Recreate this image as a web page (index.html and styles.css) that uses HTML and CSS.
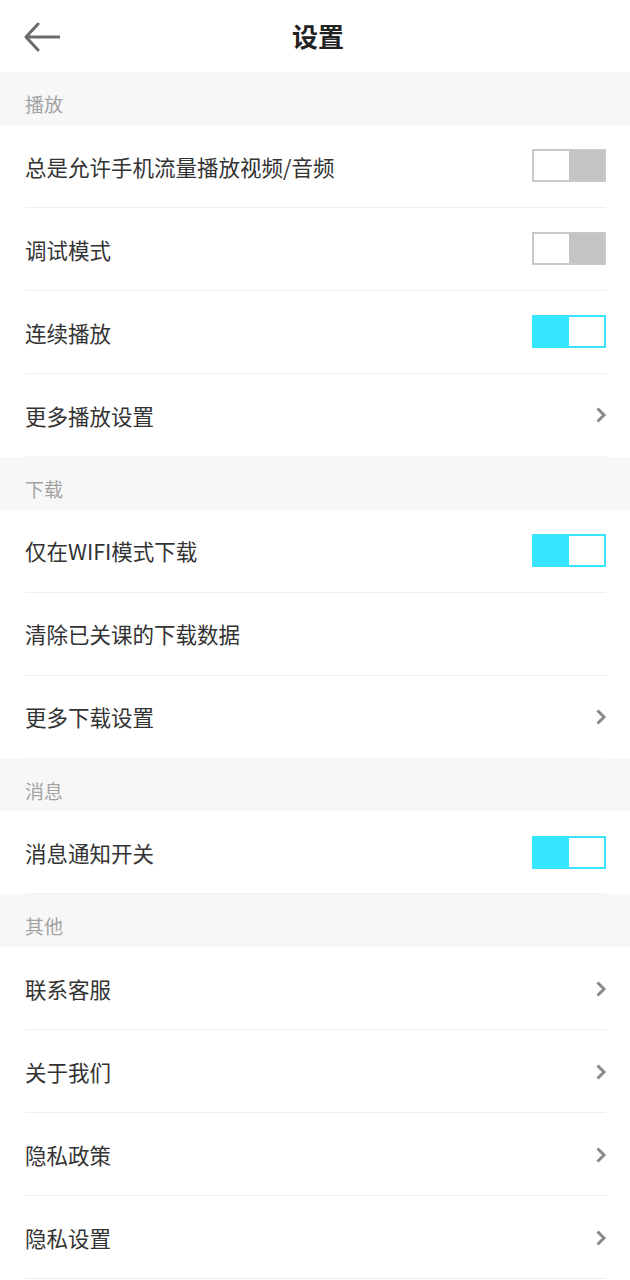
FILE: index.html
```html
<!DOCTYPE html>
<html lang="zh-CN">
<head>
<meta charset="utf-8">
<title>设置</title>
<link rel="stylesheet" href="styles.css">
</head>
<body>
<div class="page">
  <header class="topbar">
    <span class="back">
      <svg width="36" height="30" viewBox="0 0 36 30"><path d="M35 15 H2 M14 2 L2 15 L14 28" fill="none" stroke="#6b6b6b" stroke-width="3" stroke-linecap="round" stroke-linejoin="round"/></svg>
    </span>
    <h1 class="title">设置</h1>
  </header>

  <div class="section-title">播放</div>
  <div class="group">
    <div class="row"><span class="label">总是允许手机流量播放视频/音频</span><span class="switch off"><i></i></span></div>
    <div class="row"><span class="label">调试模式</span><span class="switch off"><i></i></span></div>
    <div class="row"><span class="label">连续播放</span><span class="switch on"><i></i></span></div>
    <div class="row"><span class="label">更多播放设置</span><span class="chev"><svg width="12" height="16" viewBox="0 0 12 16"><path d="M2.5 1.5 L9 8 L2.5 14.5" fill="none" stroke="#8a8a8a" stroke-width="3"/></svg></span></div>
  </div>

  <div class="section-title">下载</div>
  <div class="group">
    <div class="row"><span class="label">仅在WIFI模式下载</span><span class="switch on"><i></i></span></div>
    <div class="row"><span class="label">清除已关课的下载数据</span></div>
    <div class="row"><span class="label">更多下载设置</span><span class="chev"><svg width="12" height="16" viewBox="0 0 12 16"><path d="M2.5 1.5 L9 8 L2.5 14.5" fill="none" stroke="#8a8a8a" stroke-width="3"/></svg></span></div>
  </div>

  <div class="section-title">消息</div>
  <div class="group">
    <div class="row"><span class="label">消息通知开关</span><span class="switch on"><i></i></span></div>
  </div>

  <div class="section-title">其他</div>
  <div class="group">
    <div class="row"><span class="label">联系客服</span><span class="chev"><svg width="12" height="16" viewBox="0 0 12 16"><path d="M2.5 1.5 L9 8 L2.5 14.5" fill="none" stroke="#8a8a8a" stroke-width="3"/></svg></span></div>
    <div class="row"><span class="label">关于我们</span><span class="chev"><svg width="12" height="16" viewBox="0 0 12 16"><path d="M2.5 1.5 L9 8 L2.5 14.5" fill="none" stroke="#8a8a8a" stroke-width="3"/></svg></span></div>
    <div class="row"><span class="label">隐私政策</span><span class="chev"><svg width="12" height="16" viewBox="0 0 12 16"><path d="M2.5 1.5 L9 8 L2.5 14.5" fill="none" stroke="#8a8a8a" stroke-width="3"/></svg></span></div>
    <div class="row last"><span class="label">隐私设置</span><span class="chev"><svg width="12" height="16" viewBox="0 0 12 16"><path d="M2.5 1.5 L9 8 L2.5 14.5" fill="none" stroke="#8a8a8a" stroke-width="3"/></svg></span></div>
  </div>
</div>
</body>
</html>
```

FILE: styles.css
```css
html, body {
  margin: 0;
  padding: 0;
  background: #ffffff;
}
body {
  font-family: "Noto Sans CJK SC", "Noto Sans", sans-serif;
  color: #333333;
}
.page {
  width: 630px;
}
.topbar {
  height: 72px;
  display: flex;
  align-items: center;
  justify-content: center;
  position: relative;
  background: #fff;
}
.back {
  position: absolute;
  left: 24px;
  top: 22px;
  width: 36px;
  height: 30px;
  display: block;
}
.back svg { display: block; }
.title {
  margin: 0;
  font-size: 26px;
  font-weight: 700;
  color: #222;
  line-height: 1;
  padding-left: 6px;
}
.section-title {
  height: 52.75px;
  box-sizing: border-box;
  background: #f7f7f7;
  color: #a3a3a3;
  font-size: 19px;
  line-height: 1;
  padding: 22px 0 0 25px;
}
.group {
  padding-left: 25px;
  padding-right: 24px;
}
.row {
  height: 83px;
  box-sizing: border-box;
  border-bottom: 1px solid #efefef;
  display: flex;
  align-items: center;
  justify-content: space-between;
  padding-top: 1px;
}
.group .row:last-child { border-bottom-color: #f4f4f4; }
.group .row.last { border-bottom-color: #ececec; }
.label {
  font-size: 21.5px;
  color: #333;
  line-height: 1;
}
.switch {
  width: 74px;
  height: 33px;
  box-sizing: border-box;
  display: flex;
  margin-bottom: 1px;
}
.switch i {
  display: block;
  width: 50%;
  height: 100%;
}
.switch.off {
  border: 2px solid #c8c8c8;
  background: #c4c4c4;
}
.switch.off i {
  background: #fff;
}
.switch.on {
  border: 2px solid #38e3fb;
  background: #fff;
}
.switch.on i {
  background: #33e6fd;
}
.chev {
  width: 12px;
  height: 16px;
  display: block;
  margin-right: -1px;
}
.chev svg { display: block; }
```
